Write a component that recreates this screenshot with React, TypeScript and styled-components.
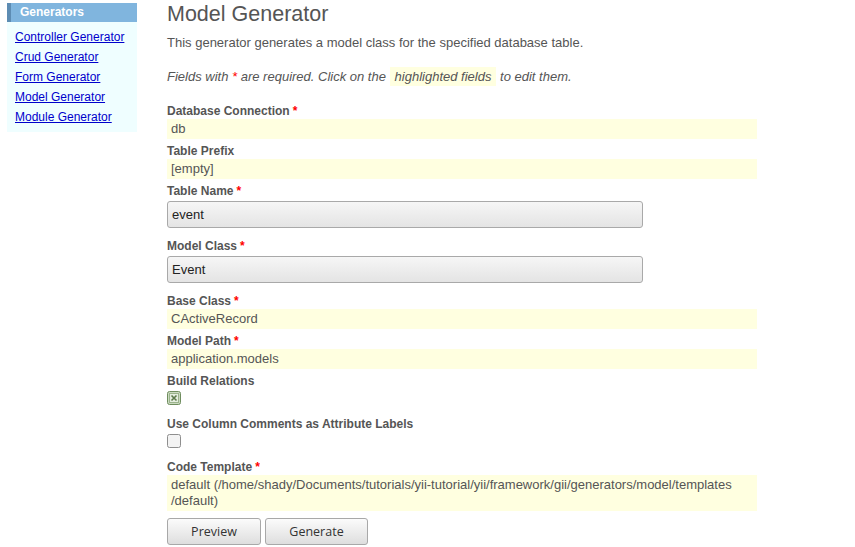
import React from 'react';
import styled, { createGlobalStyle } from 'styled-components';

const GlobalStyle = createGlobalStyle`
  html, body {
    margin: 0;
    padding: 0;
    background: #fff;
  }
  body {
    font-family: "Liberation Sans", Arial, sans-serif;
    font-size: 13px;
    color: #555;
  }
`;

// #region StyledComponents

const Page = styled.div`
  display: flex;
  align-items: flex-start;
  padding: 3px 0 0 7px;
`;

const Sidebar = styled.div`
  width: 130px;
  background: #effeff;
  padding-bottom: 5px;
`;

const SidebarHeader = styled.div`
  height: 19px;
  line-height: 19px;
  background: #80b5de;
  border-left: 4px solid #5d8cb3;
  padding-left: 9px;
  color: #fff;
  font-weight: bold;
  font-size: 12px;
`;

const LinkList = styled.ul`
  list-style: none;
  margin: 0;
  padding: 5px 0 0 8px;
`;

const LinkItem = styled.li`
  line-height: 20px;
  font-size: 12px;
`;

const NavLink = styled.a`
  color: #0000cc;
  text-decoration: underline;
`;

const Main = styled.div`
  margin-left: 30px;
  width: 590px;
`;

const Title = styled.h1`
  margin: 0;
  font-size: 21.5px;
  line-height: 22px;
  font-weight: normal;
  color: #555;
`;

const Description = styled.p`
  margin: 10px 0 0;
  line-height: 16px;
`;

const Note = styled.p`
  margin: 18px 0 0;
  line-height: 16px;
  font-style: italic;
`;

const Highlight = styled.span`
  background: #ffffe0;
  padding: 2px 5px;
`;

const Required = styled.span<{ $gap?: number }>`
  color: #f00;
  margin-left: ${(p) => p.$gap ?? 3}px;
`;

const Form = styled.div`
  margin-top: 18px;
`;

const Row = styled.div<{ $after?: number }>`
  margin-bottom: ${(p) => p.$after ?? 4}px;
`;

const Label = styled.label`
  display: block;
  height: 16px;
  line-height: 16px;
  font-size: 12px;
  font-weight: bold;
  color: #555;
`;

const Sticky = styled.div`
  background: #ffffe0;
  min-height: 20px;
  line-height: 16px;
  padding: 2px 3px 2px 4px;
  box-sizing: border-box;
  color: #555;
`;

const TextInput = styled.input`
  display: block;
  box-sizing: border-box;
  margin-top: 2px;
  width: 476px;
  height: 27px;
  padding: 0 4px;
  border: 1px solid #a9a9a9;
  border-radius: 3px;
  background: linear-gradient(#f6f6f6, #e4e4e4);
  font-family: "Liberation Sans", Arial, sans-serif;
  font-size: 13px;
  color: #222;
  outline: none;
`;

const CheckBox = styled.span`
  display: block;
  margin-top: 2px;
  width: 14px;
  height: 14px;
`;

const Buttons = styled.div`
  display: flex;
  gap: 4px;
  margin-top: 7px;
`;

const Button = styled.button<{ $width: number }>`
  width: ${(p) => p.$width}px;
  height: 27px;
  border: 1px solid #a8a8a8;
  border-radius: 3px;
  background: linear-gradient(#fbfbfb, #dedede);
  font-family: "Open Sans", "DejaVu Sans", sans-serif;
  font-size: 12.5px;
  color: #333;
  padding: 0;
`;

// #endregion

function Checked() {
  return (
    <CheckBox>
      <svg width="14" height="14" viewBox="0 0 14 14">
        <rect x="0.5" y="0.5" width="13" height="13" rx="2" fill="#c9d9bf" stroke="#6f8d5e" />
        <rect x="2.5" y="2.5" width="9" height="9" fill="#e4eddf" stroke="#9bb38c" />
        <path d="M4.5 4.5 L9.5 9.5 M9.5 4.5 L4.5 9.5" stroke="#5d7a4c" strokeWidth="1.6" />
      </svg>
    </CheckBox>
  );
}

function Unchecked() {
  return (
    <CheckBox>
      <svg width="14" height="14" viewBox="0 0 14 14">
        <rect x="0.5" y="0.5" width="13" height="13" rx="2" fill="#f3f3f3" stroke="#8e8e8e" />
      </svg>
    </CheckBox>
  );
}

const links = ['Controller Generator', 'Crud Generator', 'Form Generator', 'Model Generator', 'Module Generator'];

export default function App() {
  return (
    <>
      <GlobalStyle />
      <Page>
        <Sidebar>
          <SidebarHeader>Generators</SidebarHeader>
          <LinkList>
            {links.map((l) => (
              <LinkItem key={l}>
                <NavLink href="#">{l}</NavLink>
              </LinkItem>
            ))}
          </LinkList>
        </Sidebar>
        <Main>
          <Title>Model Generator</Title>
          <Description>This generator generates a model class for the specified database table.</Description>
          <Note>
            Fields with <Required $gap={0}>*</Required> are required. Click on the{' '}
            <Highlight>highlighted fields</Highlight> to edit them.
          </Note>
          <Form>
            <Row>
              <Label>
                Database Connection<Required>*</Required>
              </Label>
              <Sticky>db</Sticky>
            </Row>
            <Row>
              <Label>Table Prefix</Label>
              <Sticky>[empty]</Sticky>
            </Row>
            <Row $after={10}>
              <Label>
                Table Name<Required>*</Required>
              </Label>
              <TextInput defaultValue="event" />
            </Row>
            <Row $after={10}>
              <Label>
                Model Class<Required>*</Required>
              </Label>
              <TextInput defaultValue="Event" />
            </Row>
            <Row>
              <Label>
                Base Class<Required>*</Required>
              </Label>
              <Sticky>CActiveRecord</Sticky>
            </Row>
            <Row>
              <Label>
                Model Path<Required>*</Required>
              </Label>
              <Sticky>application.models</Sticky>
            </Row>
            <Row $after={11}>
              <Label>Build Relations</Label>
              <Checked />
            </Row>
            <Row $after={11}>
              <Label>Use Column Comments as Attribute Labels</Label>
              <Unchecked />
            </Row>
            <Row $after={0}>
              <Label>
                Code Template<Required>*</Required>
              </Label>
              <Sticky>
                default (/home/shady/Documents/tutorials/yii-tutorial/yii/framework/gii/generators/model/templates
                <wbr />
                /default)
              </Sticky>
            </Row>
            <Buttons>
              <Button $width={94}>Preview</Button>
              <Button $width={103}>Generate</Button>
            </Buttons>
          </Form>
        </Main>
      </Page>
    </>
  );
}
